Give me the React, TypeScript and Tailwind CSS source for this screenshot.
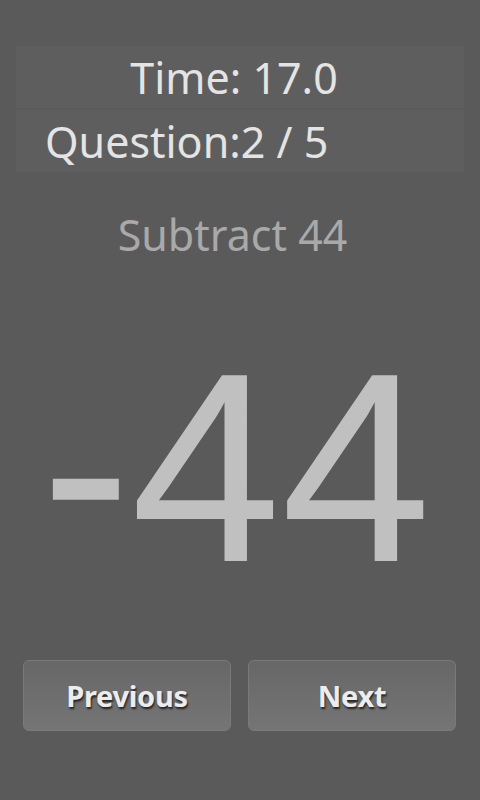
import React from "react";

export default function App() {
  return (
    <div className="w-[480px] h-[800px] bg-[#5a5a5a] flex flex-col overflow-hidden" style={{ fontFamily: '"Noto Sans", "Open Sans", sans-serif' }}>
      <div className="h-[46px]" />
      <div className="mx-[16px] flex flex-col gap-[2px]">
        <div className="h-[62px] bg-[#5e5e5e] flex items-center justify-center pr-[12px]">
          <span className="text-[43px] leading-none text-[#e4e4e4]">Time: 17.0</span>
        </div>
        <div className="h-[62px] bg-[#5e5e5e] flex items-center pl-[29px]">
          <span className="text-[43px] leading-none text-[#e4e4e4]">Question:2 / 5</span>
        </div>
      </div>
      <div className="mt-[34px] h-[56px] flex items-center justify-center pr-[15px]">
        <span className="text-[43px] leading-none text-[#a9a9a9]">Subtract 44</span>
      </div>
      <div className="mt-[56px] h-[300px] flex items-center justify-center pr-[8px]">
        <span className="text-[270px] leading-none text-[#c0c0c0]" style={{ fontFamily: '"Liberation Sans", Arial, sans-serif' }}>-44</span>
      </div>
      <div className="flex-1" />
      <div className="flex gap-[17px] px-[23px] pr-[24px] mb-[69px]">
        {["Previous", "Next"].map((t) => (
          <div key={t} className="flex-1 h-[71px] rounded-[6px] border border-[#7a7a7a] bg-gradient-to-b from-[#676767] to-[#757575] flex items-center justify-center">
            <span className="text-[29px] font-bold text-[#ececec] tracking-[-0.3px]" style={{ textShadow: "1px 2px 2px #222" }}>{t}</span>
          </div>
        ))}
      </div>
    </div>
  );
}
